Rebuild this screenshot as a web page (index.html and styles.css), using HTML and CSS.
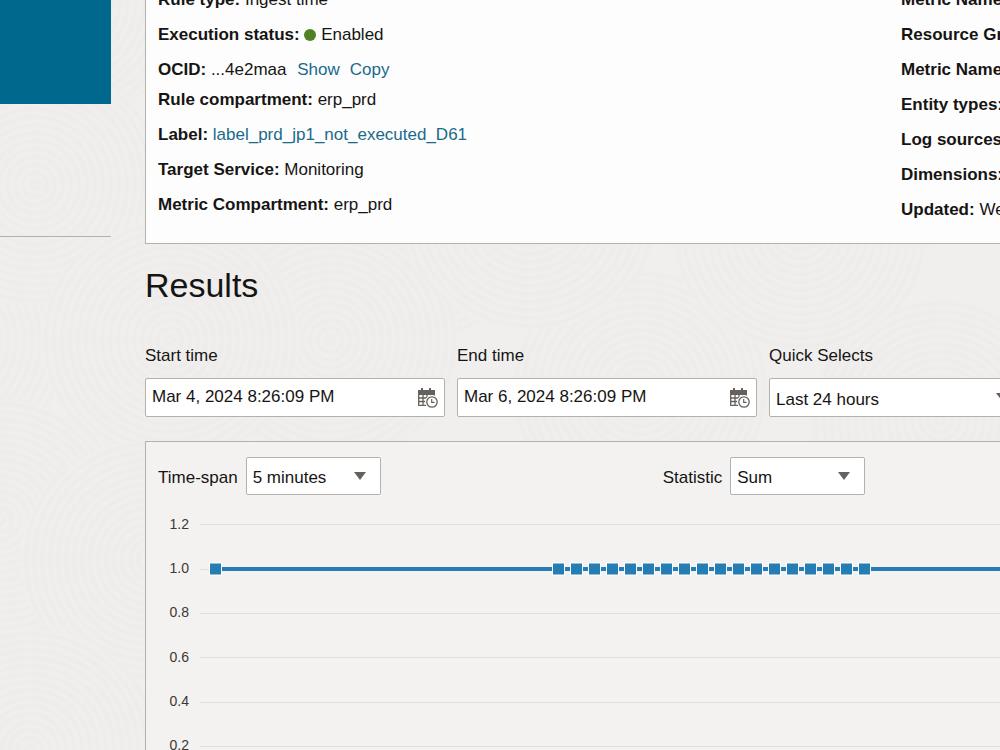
FILE: index.html
```html
<!DOCTYPE html>
<html lang="en">
<head>
    <meta charset="UTF-8">
    <meta name="viewport" content="width=device-width, initial-scale=1.0">
    <title>Detection rule</title>
    <link rel="stylesheet" href="styles.css">
</head>
<body>
    <!-- background rings -->
    <svg class="backdrop" aria-hidden="true">
        <defs>
            <radialGradient id="ring" gradientUnits="userSpaceOnUse" cx="0" cy="0" r="8" spreadMethod="repeat">
                <stop offset="0" stop-color="#f0efee"/>
                <stop offset="0.5" stop-color="#edecea"/>
                <stop offset="1" stop-color="#f0efee"/>
            </radialGradient>
            <ellipse id="rings" rx="130" ry="120" fill="url(#ring)"/>
        </defs>
        <use href="#rings" x="60" y="0"/>
        <use href="#rings" x="420" y="220"/>
        <use href="#rings" x="940" y="420"/>
        <use href="#rings" x="-60" y="340"/>
        <use href="#rings" x="640" y="390"/>
        <use href="#rings" x="330" y="340"/>
        <use href="#rings" x="800" y="230"/>
        <use href="#rings" x="530" y="210"/>
        <use href="#rings" x="35" y="185"/>
        <use href="#rings" x="170" y="340"/>
        <use href="#rings" x="0" y="520"/>
        <use href="#rings" x="150" y="560"/>
        <use href="#rings" x="30" y="750"/>
    </svg>

    <div class="page">
        <aside class="sidebar">
            <div class="rule-icon"></div>
            <hr class="divider">
        </aside>

        <main class="content">
            <section class="details">
                <ul class="detail-list">
                    <li><b>Rule type:</b> Ingest time</li>
                    <li><b>Execution status:</b> <span class="status-dot"></span> Enabled</li>
                    <li class="short"><b>OCID:</b> ...4e2maa <a class="action" href="#">Show</a><a class="action" href="#">Copy</a></li>
                    <li><b>Rule compartment:</b> erp_prd</li>
                    <li><b>Label:</b> <a href="#">label_prd_jp1_not_executed_D61</a></li>
                    <li><b>Target Service:</b> Monitoring</li>
                    <li><b>Metric Compartment:</b> erp_prd</li>
                </ul>
                <ul class="detail-list">
                    <li><b>Metric Namespace:</b></li>
                    <li><b>Resource Group:</b></li>
                    <li><b>Metric Name:</b></li>
                    <li><b>Entity types:</b></li>
                    <li><b>Log sources:</b></li>
                    <li><b>Dimensions:</b></li>
                    <li><b>Updated:</b> Wed</li>
                </ul>
            </section>

            <h1>Results</h1>

            <div class="filters">
                <div class="field">
                    <label for="startTime">Start time</label>
                    <div class="date-box">
                        <input type="text" id="startTime" value="Mar 4, 2024 8:26:09 PM">
                        <button type="button" aria-label="Pick start time">
                            <svg width="20" height="20" viewBox="0 0 20 20">
                                <g id="calendar" fill="none" stroke="#66615c">
                                    <path d="M0 2h17v5H0z" fill="#66615c" stroke="none"/>
                                    <path d="M4 0v4M12 0v4" stroke-width="2"/>
                                    <path d="M.7 6v11.3H9M5 6v11M9 6v4M13 6v2M1 10h9M1 13.500h8M16.300 6v2" stroke-width="1.300"/>
                                    <circle cx="14" cy="14" r="6.500" fill="#fff" stroke="#fff"/>
                                    <circle cx="14" cy="14" r="5.200" stroke-width="1.300"/>
                                    <path d="M13.700 11v3.300H16.500" stroke-width="1.200"/>
                                </g>
                            </svg>
                        </button>
                    </div>
                </div>
                <div class="field">
                    <label for="endTime">End time</label>
                    <div class="date-box">
                        <input type="text" id="endTime" value="Mar 6, 2024 8:26:09 PM">
                        <button type="button" aria-label="Pick end time">
                            <svg width="20" height="20" viewBox="0 0 20 20"><use href="#calendar"/></svg>
                        </button>
                    </div>
                </div>
                <div class="field quick">
                    <label for="quickSelect">Quick Selects</label>
                    <div class="select-box">
                        <select id="quickSelect">
                            <option>Last 24 hours</option>
                        </select>
                        <svg class="arrow" viewBox="0 0 12 8"><path d="M0 0h12L6 8z"/></svg>
                    </div>
                </div>
            </div>

            <section class="chart-panel">
                <div class="chart-options">
                    <div class="option">
                        <label for="timeSpan">Time-span</label>
                        <div class="select-box">
                            <select id="timeSpan">
                                <option>5 minutes</option>
                            </select>
                            <svg class="arrow" viewBox="0 0 12 8"><path d="M0 0h12L6 8z"/></svg>
                        </div>
                    </div>
                    <div class="option">
                        <label for="statistic">Statistic</label>
                        <div class="select-box">
                            <select id="statistic">
                                <option>Sum</option>
                            </select>
                            <svg class="arrow" viewBox="0 0 12 8"><path d="M0 0h12L6 8z"/></svg>
                        </div>
                    </div>
                </div>

                <svg class="chart">
                    <defs>
                        <marker id="point" markerUnits="userSpaceOnUse" markerWidth="14" markerHeight="14" refX="7" refY="7">
                            <rect x="0.500" y="0.500" width="13" height="13" fill="#fff"/>
                            <rect x="1.500" y="1.500" width="11" height="11" fill="#267db3"/>
                        </marker>
                    </defs>
                    <g class="grid">
                        <rect x="54" y="29" width="100%" height="1"/>
                        <rect x="54" y="74" width="100%" height="1"/>
                        <rect x="54" y="118" width="100%" height="1"/>
                        <rect x="54" y="162" width="100%" height="1"/>
                        <rect x="54" y="207" width="100%" height="1"/>
                        <rect x="54" y="251" width="100%" height="1"/>
                    </g>
                    <g class="axis">
                        <text x="43" y="34">1.2</text>
                        <text x="43" y="78">1.0</text>
                        <text x="43" y="122">0.8</text>
                        <text x="43" y="167">0.6</text>
                        <text x="43" y="211">0.4</text>
                        <text x="43" y="255">0.2</text>
                    </g>
                    <polyline class="series" points="69.500,74 412.500,74 430.500,74 448.500,74 466.500,74 484.500,74 502.500,74 520.500,74 538.500,74 556.500,74 574.500,74 592.500,74 610.500,74 628.500,74 646.500,74 664.500,74 682.500,74 700.500,74 718.500,74 1400,74"/>
                </svg>
            </section>
        </main>
    </div>
</body>
</html>
```
FILE: styles.css
```css
* {
    box-sizing: border-box;
}

body {
    margin: 0;
    height: 100vh;
    overflow: hidden;
    color: #161513;
    background-color: #f0efee;
    font-family: "Liberation Sans", Arial, sans-serif;
    font-size: 17px;
    line-height: 20px;
}

a {
    color: #1b6a8c;
    text-decoration: none;
}

/* sits behind the whole page */
.backdrop {
    position: absolute;
    top: 0;
    left: 0;
    width: 100%;
    height: 100%;
    z-index: -1;
}

.page {
    display: flex;
    gap: 34px;
}

.sidebar {
    flex: 0 0 111px;
}

.rule-icon {
    height: 104px;
    background-color: #00688c;
}

.divider {
    margin: 132px 0 0;
    border: 0;
    border-top: 1px solid #b3b1ae;
}

/* wider than a small window, runs off to the right */
.content {
    flex: 1 0 1512px;
}

.details {
    display: grid;
    grid-template-columns: 1fr 1fr;
    margin-top: -18px;
    padding: 0 12px 16px;
    background-color: #fdfdfd;
    border: 1px solid #b3b1ae;
    border-top: 0;
}

.detail-list {
    margin: 0;
    padding: 0;
    list-style: none;
}

.detail-list li {
    height: 35px;
    line-height: 35px;
}

.detail-list .short {
    height: 30px;
}

.status-dot {
    display: inline-block;
    width: 12px;
    height: 12px;
    border-radius: 50%;
    background-color: #508223;
    vertical-align: -1px;
}

.action {
    margin-left: 6px;
}

.action + .action {
    margin-left: 10px;
}

h1 {
    margin: 21px 0 41px;
    font-size: 34px;
    font-weight: normal;
    line-height: 40px;
}

.filters {
    display: flex;
    gap: 12px;
}

.field {
    width: 300px;
}

.field label {
    display: block;
    margin-bottom: 12px;
}

.quick {
    width: 254px;
}

.date-box {
    display: flex;
    align-items: center;
    height: 39px;
    padding: 0 6px;
    background-color: #fff;
    border: 1px solid #b3b1ae;
    border-radius: 2px;
}

.date-box input {
    flex: 1;
    min-width: 0;
    height: 36px;
    padding: 0 0 2px;
    border: 0;
    background: none;
    color: inherit;
    font: inherit;
}

.date-box button {
    display: flex;
    padding: 0;
    border: 0;
    background: none;
}

.select-box {
    position: relative;
}

.select-box select {
    display: block;
    width: 135px;
    height: 38px;
    padding: 4px 6px 0;
    appearance: none;
    background-color: #fff;
    border: 1px solid #b3b1ae;
    border-radius: 2px;
    color: inherit;
    font: inherit;
}

.quick select {
    width: 100%;
    height: 39px;
}

.arrow {
    position: absolute;
    top: 15px;
    right: 15px;
    width: 12px;
    height: 8px;
    fill: #66615c;
    pointer-events: none;
}

.chart-panel {
    margin-top: 24px;
    background-color: #f3f2f1;
    border: 1px solid #b3b1ae;
}

.chart-options {
    display: grid;
    grid-template-columns: 1fr 1fr 1fr;
    column-gap: 28px;
    padding: 15px 12px 0;
}

.option {
    display: flex;
    align-items: center;
    gap: 8px;
}

.option label {
    padding-top: 4px;
}

.chart {
    display: block;
    width: 100%;
    height: 320px;
}

.grid {
    fill: #dfdedc;
}

.axis {
    fill: #3b3835;
    font-size: 14px;
    text-anchor: end;
}

.series {
    fill: none;
    stroke: #267db3;
    stroke-width: 4px;
    marker-start: url(#point);
    marker-mid: url(#point);
}
```
